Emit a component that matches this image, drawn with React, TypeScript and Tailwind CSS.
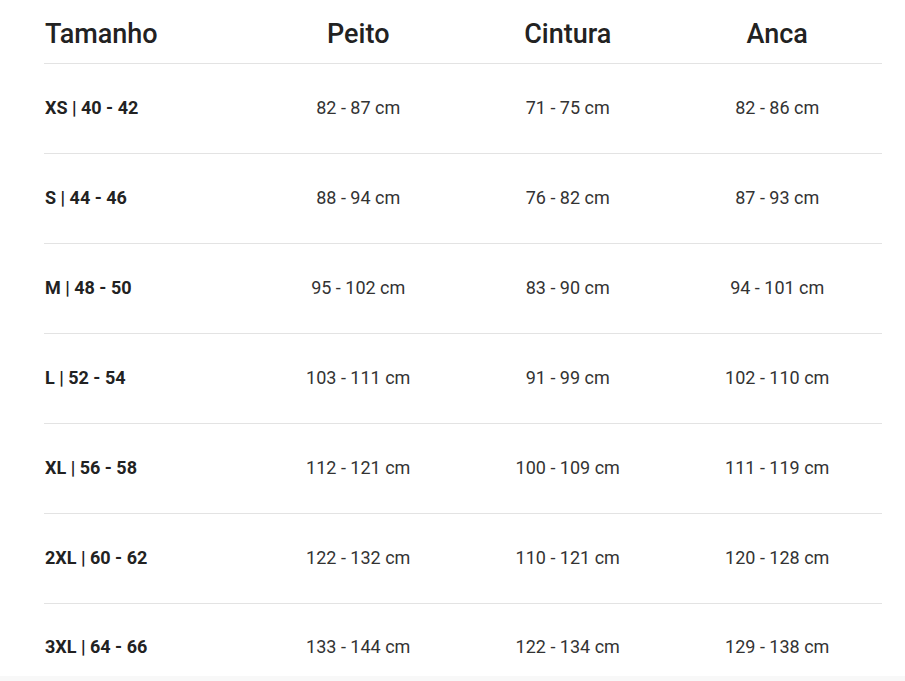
const rows = [
  { size: "XS | 40 - 42", chest: "82 - 87 cm", waist: "71 - 75 cm", hip: "82 - 86 cm" },
  { size: "S | 44 - 46", chest: "88 - 94 cm", waist: "76 - 82 cm", hip: "87 - 93 cm" },
  { size: "M | 48 - 50", chest: "95 - 102 cm", waist: "83 - 90 cm", hip: "94 - 101 cm" },
  { size: "L | 52 - 54", chest: "103 - 111 cm", waist: "91 - 99 cm", hip: "102 - 110 cm" },
  { size: "XL | 56 - 58", chest: "112 - 121 cm", waist: "100 - 109 cm", hip: "111 - 119 cm" },
  { size: "2XL | 60 - 62", chest: "122 - 132 cm", waist: "110 - 121 cm", hip: "120 - 128 cm" },
  { size: "3XL | 64 - 66", chest: "133 - 144 cm", waist: "122 - 134 cm", hip: "129 - 138 cm" },
];

const App = () => {
  return (
    <div className="min-h-[681px] bg-white font-['Roboto',sans-serif] text-[#222]">
      <div className="ml-[44px] w-[838px]">
        {/* header */}
        <div className="grid h-[64px] grid-cols-4 items-center border-b border-[#e3e3e3] pt-[5px] text-[27px] font-medium text-[#222]">
          <div className="pl-px text-left">Tamanho</div>
          <div className="text-center">Peito</div>
          <div className="text-center">Cintura</div>
          <div className="text-center">Anca</div>
        </div>

        {rows.map((r, i) => (
          <div
            key={r.size}
            className={
              i < rows.length - 1
                ? "grid h-[90px] grid-cols-4 items-center border-b border-[#e3e3e3] pb-[2px] text-[18px] text-[#333]"
                : "grid h-[72px] grid-cols-4 items-center pt-[12px] text-[18px] text-[#333]"
            }
          >
            <div className="pl-px font-bold text-[#222]">{r.size}</div>
            <div className="text-center">{r.chest}</div>
            <div className="text-center">{r.waist}</div>
            <div className="text-center">{r.hip}</div>
          </div>
        ))}
      </div>
      <div className="h-[6px] bg-[#f8f8f8]" />
    </div>
  );
};

export default App;
